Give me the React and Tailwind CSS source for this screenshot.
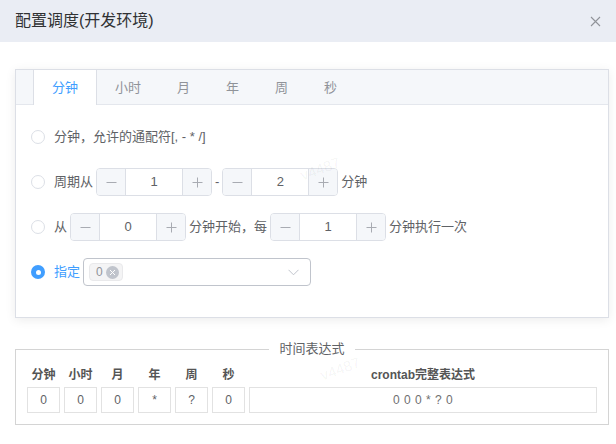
import { useState } from "react";

const FONT = { fontFamily: '"Liberation Sans", "Noto Sans CJK SC", sans-serif' };

const tabs = ["分钟", "小时", "月", "年", "周", "秒"];

function Radio({ checked }) {
  return checked ? (
    <span className="flex h-[14px] w-[14px] shrink-0 items-center justify-center rounded-full bg-[#409eff]">
      <span className="h-[5px] w-[5px] rounded-full bg-white" />
    </span>
  ) : (
    <span className="h-[14px] w-[14px] shrink-0 rounded-full border border-[#dcdfe6] bg-white" />
  );
}

function NumberInput({ value }) {
  return (
    <div className="flex h-[28px] w-[116px] shrink-0 overflow-hidden rounded-[4px] border border-[#dcdfe6] bg-white">
      <span className="flex w-[29px] items-center justify-center border-r border-[#dcdfe6] bg-[#f5f7fa]">
        <svg width="11" height="11" viewBox="0 0 11 11">
          <path d="M0.5 5.5h10" stroke="#a8abb2" strokeWidth="1" />
        </svg>
      </span>
      <span className="flex flex-1 items-center justify-center text-[13px] text-[#606266]">
        {value}
      </span>
      <span className="flex w-[29px] items-center justify-center border-l border-[#dcdfe6] bg-[#f5f7fa]">
        <svg width="11" height="11" viewBox="0 0 11 11">
          <path d="M0.5 5.5h10M5.5 0.5v10" stroke="#a8abb2" strokeWidth="1" />
        </svg>
      </span>
    </div>
  );
}

function Row({ checked, children }) {
  return (
    <div className="flex h-[28px] items-center">
      <Radio checked={checked} />
      <div
        className={`ml-[9px] flex items-center gap-[3px] text-[13px] ${
          checked ? "text-[#409eff]" : "text-[#606266]"
        }`}
      >
        {children}
      </div>
    </div>
  );
}

export default function App() {
  const [active] = useState(0);
  const fields = [
    ["分钟", "0"],
    ["小时", "0"],
    ["月", "0"],
    ["年", "*"],
    ["周", "?"],
    ["秒", "0"],
  ];

  return (
    <div className="relative h-[444px] w-[616px] overflow-hidden bg-white" style={FONT}>
      {/* dialog header */}
      <div className="flex h-[42px] items-center justify-between bg-[#eaedf4] pl-[15px] pr-[10px]">
        <span className="text-[16px] text-[#303133]">配置调度(开发环境)</span>
        <svg width="11" height="11" viewBox="0 0 11 11" className="mr-[5px]">
          <path d="M1 1l9 9M10 1l-9 9" stroke="#909399" strokeWidth="1.1" />
        </svg>
      </div>

      <div className="pl-[15px] pr-[7px] pt-[27px]">
        {/* tabs card */}
        <div className="border border-[#dcdfe6] bg-white shadow-[0_2px_10px_0_rgba(0,0,0,0.08)]">
          <div className="flex h-[35px] border-b border-[#e4e7ed] bg-[#f5f7fa] pl-[17px]">
            {tabs.map((t, i) => (
              <div
                key={t}
                className={`-mb-px flex items-center px-[18px] text-[13px] ${
                  i === active
                    ? "border-x border-[#dcdfe6] bg-white px-[17px] text-[#409eff]"
                    : "text-[#909399]"
                }`}
              >
                {t}
              </div>
            ))}
          </div>

          <div className="flex flex-col gap-[17px] pb-[31px] pl-[15px] pt-[18px]">
            <Row>
              <span>分钟，允许的通配符[, - * /]</span>
            </Row>
            <Row>
              <span>周期从</span>
              <NumberInput value="1" />
              <span>-</span>
              <NumberInput value="2" />
              <span>分钟</span>
            </Row>
            <Row>
              <span>从</span>
              <NumberInput value="0" />
              <span>分钟开始，每</span>
              <NumberInput value="1" />
              <span>分钟执行一次</span>
            </Row>
            <Row checked>
              <span>指定</span>
              <div className="flex h-[28px] w-[228px] items-center justify-between rounded-[4px] border border-[#c0c4cc] bg-white pl-[5px] pr-[11px]">
                <span className="flex h-[18px] items-center gap-[3px] rounded-[4px] border border-[#e9e9eb] bg-[#f4f4f5] pl-[6px] pr-[3px] text-[12px] text-[#909399]">
                  0
                  <span className="flex h-[13px] w-[13px] items-center justify-center rounded-full bg-[#c0c4cc]">
                    <svg width="7" height="7" viewBox="0 0 7 7">
                      <path d="M1 1l5 5M6 1l-5 5" stroke="#fff" strokeWidth="1" />
                    </svg>
                  </span>
                </span>
                <svg width="11" height="7" viewBox="0 0 11 7">
                  <path d="M0.5 0.8l5 5 5-5" fill="none" stroke="#c0c4cc" strokeWidth="1" />
                </svg>
              </div>
            </Row>
          </div>
        </div>

        {/* expression fieldset */}
        <fieldset className="mt-[22px] border border-[#d4d4d4] px-[11px] pb-[11px]">
          <legend className="mx-auto px-[10px] text-[13px] leading-[18px] text-[#606266]">
            时间表达式
          </legend>
          <div className="flex gap-[4px] pt-[7px]">
            {fields.map(([label]) => (
              <div
                key={label}
                className="w-[33px] text-center text-[12px] font-semibold leading-[20px] text-[#555]"
              >
                {label}
              </div>
            ))}
            <div className="flex-1 text-center text-[12px] font-semibold leading-[20px] text-[#555]">
              crontab完整表达式
            </div>
          </div>
          <div className="mt-[2px] flex gap-[4px]">
            {fields.map(([label, v]) => (
              <div
                key={label}
                className="flex h-[26px] w-[33px] items-center justify-center border border-[#e2e2e2] text-[12px] text-[#606266]"
              >
                {v}
              </div>
            ))}
            <div className="flex h-[26px] flex-1 items-center justify-center border border-[#e2e2e2] text-[12px] tracking-[0.5px] text-[#707070]">
              0 0 0 * ? 0
            </div>
          </div>
        </fieldset>
      </div>

      {/* watermark */}
      <span className="pointer-events-none absolute left-[300px] top-[158px] -rotate-[20deg] text-[15px] text-black/[0.05]">
        v4487
      </span>
      <span className="pointer-events-none absolute left-[320px] top-[358px] -rotate-[20deg] text-[15px] text-black/[0.05]">
        v4487
      </span>
    </div>
  );
}
